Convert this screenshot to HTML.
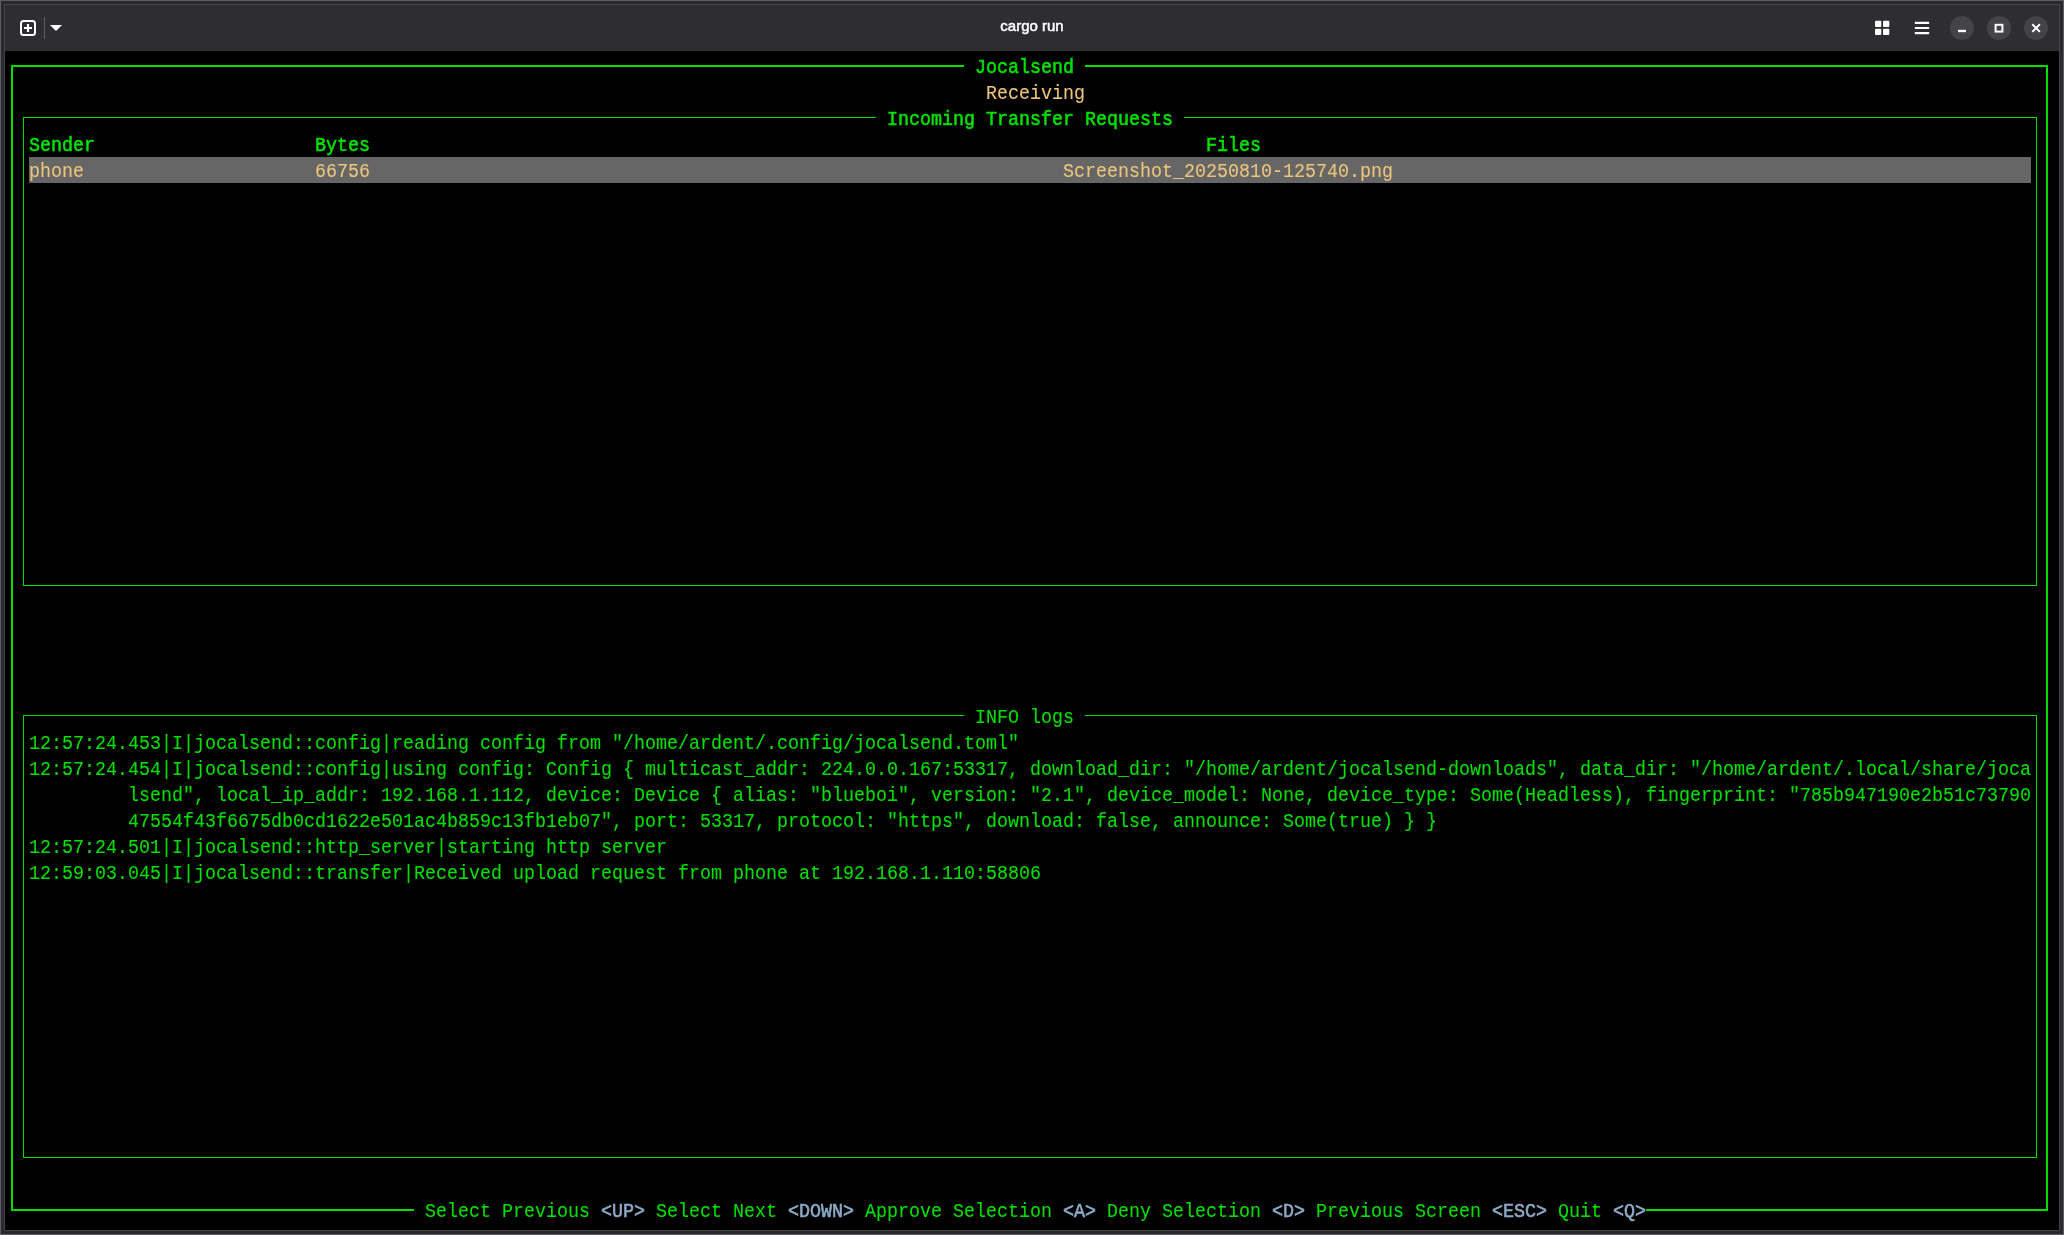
<!DOCTYPE html>
<html><head><meta charset="utf-8"><style>
html,body{margin:0;padding:0;}
body{width:2064px;height:1235px;position:relative;overflow:hidden;background:#5d5c62;}
#frame{position:absolute;left:1px;top:1px;width:2062px;height:1233px;background:#2a292e;}
#inner{position:absolute;left:4px;top:4px;width:2056px;height:1227px;background:#454449;}
#title{position:absolute;left:5px;top:5px;width:2054px;height:46px;background:#2e2d32;}
#term{position:absolute;left:5px;top:51px;width:2054px;height:1179px;background:#000;}
#scr{position:absolute;left:0;top:0;width:2064px;height:1235px;will-change:transform;}
#scr div{position:absolute;}
.t{position:absolute;white-space:pre;font-family:"Liberation Mono",monospace;font-size:20.5px;line-height:26px;transform:scaleX(0.89416);transform-origin:0 0;}
#ttl{position:absolute;left:0;top:15.3px;width:2064px;text-align:center;color:#fff;font-family:"Liberation Sans",sans-serif;font-size:15px;line-height:22px;letter-spacing:0px;-webkit-text-stroke:0.5px #fff;will-change:transform;}
</style></head><body>
<div id="frame"></div><div id="inner"></div><div id="title"></div><div id="term"></div>
<div id="ttl">cargo run</div>

<svg style="position:absolute;left:0;top:0" width="2064" height="60">
 <rect x="21" y="21" width="14" height="14" rx="2.5" ry="2.5" fill="none" stroke="#fff" stroke-width="2"/>
 <path d="M28 24v8M24 28h8" stroke="#fff" stroke-width="2.2"/>
 <rect x="44" y="17" width="1" height="22" fill="#5b5b60"/>
 <path d="M50 25h12l-6 6z" fill="#fff"/>
 <g fill="#fff">
  <rect x="1875" y="20.7" width="6.3" height="6.3" rx="1"/>
  <rect x="1883" y="20.7" width="6.3" height="6.3" rx="1"/>
  <rect x="1875" y="28.7" width="6.3" height="6.3" rx="1"/>
  <rect x="1883" y="28.7" width="6.3" height="6.3" rx="1"/>
  <rect x="1914.8" y="21.8" width="14.4" height="2.2" rx="0.6"/>
  <rect x="1914.8" y="26.9" width="14.4" height="2.2" rx="0.6"/>
  <rect x="1914.8" y="32.0" width="14.4" height="2.2" rx="0.6"/>
 </g>
 <circle cx="1962" cy="28" r="12" fill="#434348"/>
 <circle cx="1999" cy="28" r="12" fill="#434348"/>
 <circle cx="2036" cy="28" r="12" fill="#434348"/>
 <rect x="1958" y="29.8" width="8" height="2.4" fill="#fff"/>
 <rect x="1995.6" y="24.8" width="6.8" height="6.8" fill="none" stroke="#fff" stroke-width="2"/>
 <path d="M2032.3 24.3l7.6 7.6M2039.9 24.3l-7.6 7.6" stroke="#fff" stroke-width="2"/>
</svg>

<div id="scr">
<div style="left:11px;top:65px;width:2px;height:1146px;background:#00e000"></div>
<div style="left:2046px;top:65px;width:2px;height:1146px;background:#00e000"></div>
<div style="left:11px;top:65px;width:953px;height:2px;background:#00e000"></div>
<div style="left:1085px;top:65px;width:963px;height:2px;background:#00e000"></div>
<div style="left:11px;top:1209px;width:403px;height:2px;background:#00e000"></div>
<div style="left:1646px;top:1209px;width:402px;height:2px;background:#00e000"></div>
<span class="t" style="left:975px;top:54.56px;color:#00e000;-webkit-text-stroke:0.6px #00e000">Jocalsend</span>
<span class="t" style="left:986px;top:80.56px;color:#ecc57b;-webkit-text-stroke:0.1px #ecc57b">Receiving</span>
<div style="left:23px;top:117px;width:1px;height:469px;background:#00e000"></div>
<div style="left:2036px;top:117px;width:1px;height:469px;background:#00e000"></div>
<div style="left:23px;top:117px;width:853px;height:1px;background:#00e000"></div>
<div style="left:1184px;top:117px;width:853px;height:1px;background:#00e000"></div>
<div style="left:23px;top:585px;width:2014px;height:1px;background:#00e000"></div>
<span class="t" style="left:887px;top:106.56px;color:#00e000;-webkit-text-stroke:0.6px #00e000">Incoming Transfer Requests</span>
<span class="t" style="left:29px;top:132.56px;color:#00e000;-webkit-text-stroke:0.6px #00e000">Sender</span>
<span class="t" style="left:315px;top:132.56px;color:#00e000;-webkit-text-stroke:0.6px #00e000">Bytes</span>
<span class="t" style="left:1206px;top:132.56px;color:#00e000;-webkit-text-stroke:0.6px #00e000">Files</span>
<div style="left:29px;top:157px;width:2002px;height:26px;background:#666666"></div>
<span class="t" style="left:29px;top:158.56px;color:#ecc57b;-webkit-text-stroke:0.1px #ecc57b">phone</span>
<span class="t" style="left:315px;top:158.56px;color:#ecc57b;-webkit-text-stroke:0.1px #ecc57b">66756</span>
<span class="t" style="left:1063px;top:158.56px;color:#ecc57b;-webkit-text-stroke:0.1px #ecc57b">Screenshot_20250810-125740.png</span>
<div style="left:23px;top:715px;width:1px;height:443px;background:#00e000"></div>
<div style="left:2036px;top:715px;width:1px;height:443px;background:#00e000"></div>
<div style="left:23px;top:715px;width:941px;height:1px;background:#00e000"></div>
<div style="left:1085px;top:715px;width:952px;height:1px;background:#00e000"></div>
<div style="left:23px;top:1157px;width:2014px;height:1px;background:#00e000"></div>
<span class="t" style="left:975px;top:704.56px;color:#00e000;-webkit-text-stroke:0.1px #00e000">INFO logs</span>
<span class="t" style="left:29px;top:730.56px;color:#00e000;-webkit-text-stroke:0.1px #00e000">12:57:24.453|I|jocalsend::config|reading config from &quot;/home/ardent/.config/jocalsend.toml&quot;</span>
<span class="t" style="left:29px;top:756.56px;color:#00e000;-webkit-text-stroke:0.1px #00e000">12:57:24.454|I|jocalsend::config|using config: Config { multicast_addr: 224.0.0.167:53317, download_dir: &quot;/home/ardent/jocalsend-downloads&quot;, data_dir: &quot;/home/ardent/.local/share/joca</span>
<span class="t" style="left:128px;top:782.56px;color:#00e000;-webkit-text-stroke:0.1px #00e000">lsend&quot;, local_ip_addr: 192.168.1.112, device: Device { alias: &quot;blueboi&quot;, version: &quot;2.1&quot;, device_model: None, device_type: Some(Headless), fingerprint: &quot;785b947190e2b51c73790</span>
<span class="t" style="left:128px;top:808.56px;color:#00e000;-webkit-text-stroke:0.1px #00e000">47554f43f6675db0cd1622e501ac4b859c13fb1eb07&quot;, port: 53317, protocol: &quot;https&quot;, download: false, announce: Some(true) } }</span>
<span class="t" style="left:29px;top:834.56px;color:#00e000;-webkit-text-stroke:0.1px #00e000">12:57:24.501|I|jocalsend::http_server|starting http server</span>
<span class="t" style="left:29px;top:860.56px;color:#00e000;-webkit-text-stroke:0.1px #00e000">12:59:03.045|I|jocalsend::transfer|Received upload request from phone at 192.168.1.110:58806</span>
<span class="t" style="left:425px;top:1198.56px;color:#00e000;-webkit-text-stroke:0.1px #00e000">Select Previous </span>
<span class="t" style="left:601px;top:1198.56px;color:#8eaac8;-webkit-text-stroke:0.6px #8eaac8">&lt;UP&gt;</span>
<span class="t" style="left:645px;top:1198.56px;color:#00e000;-webkit-text-stroke:0.1px #00e000"> Select Next </span>
<span class="t" style="left:788px;top:1198.56px;color:#8eaac8;-webkit-text-stroke:0.6px #8eaac8">&lt;DOWN&gt;</span>
<span class="t" style="left:854px;top:1198.56px;color:#00e000;-webkit-text-stroke:0.1px #00e000"> Approve Selection </span>
<span class="t" style="left:1063px;top:1198.56px;color:#8eaac8;-webkit-text-stroke:0.6px #8eaac8">&lt;A&gt;</span>
<span class="t" style="left:1096px;top:1198.56px;color:#00e000;-webkit-text-stroke:0.1px #00e000"> Deny Selection </span>
<span class="t" style="left:1272px;top:1198.56px;color:#8eaac8;-webkit-text-stroke:0.6px #8eaac8">&lt;D&gt;</span>
<span class="t" style="left:1305px;top:1198.56px;color:#00e000;-webkit-text-stroke:0.1px #00e000"> Previous Screen </span>
<span class="t" style="left:1492px;top:1198.56px;color:#8eaac8;-webkit-text-stroke:0.6px #8eaac8">&lt;ESC&gt;</span>
<span class="t" style="left:1547px;top:1198.56px;color:#00e000;-webkit-text-stroke:0.1px #00e000"> Quit </span>
<span class="t" style="left:1613px;top:1198.56px;color:#8eaac8;-webkit-text-stroke:0.6px #8eaac8">&lt;Q&gt;</span>
</div>
</body></html>
